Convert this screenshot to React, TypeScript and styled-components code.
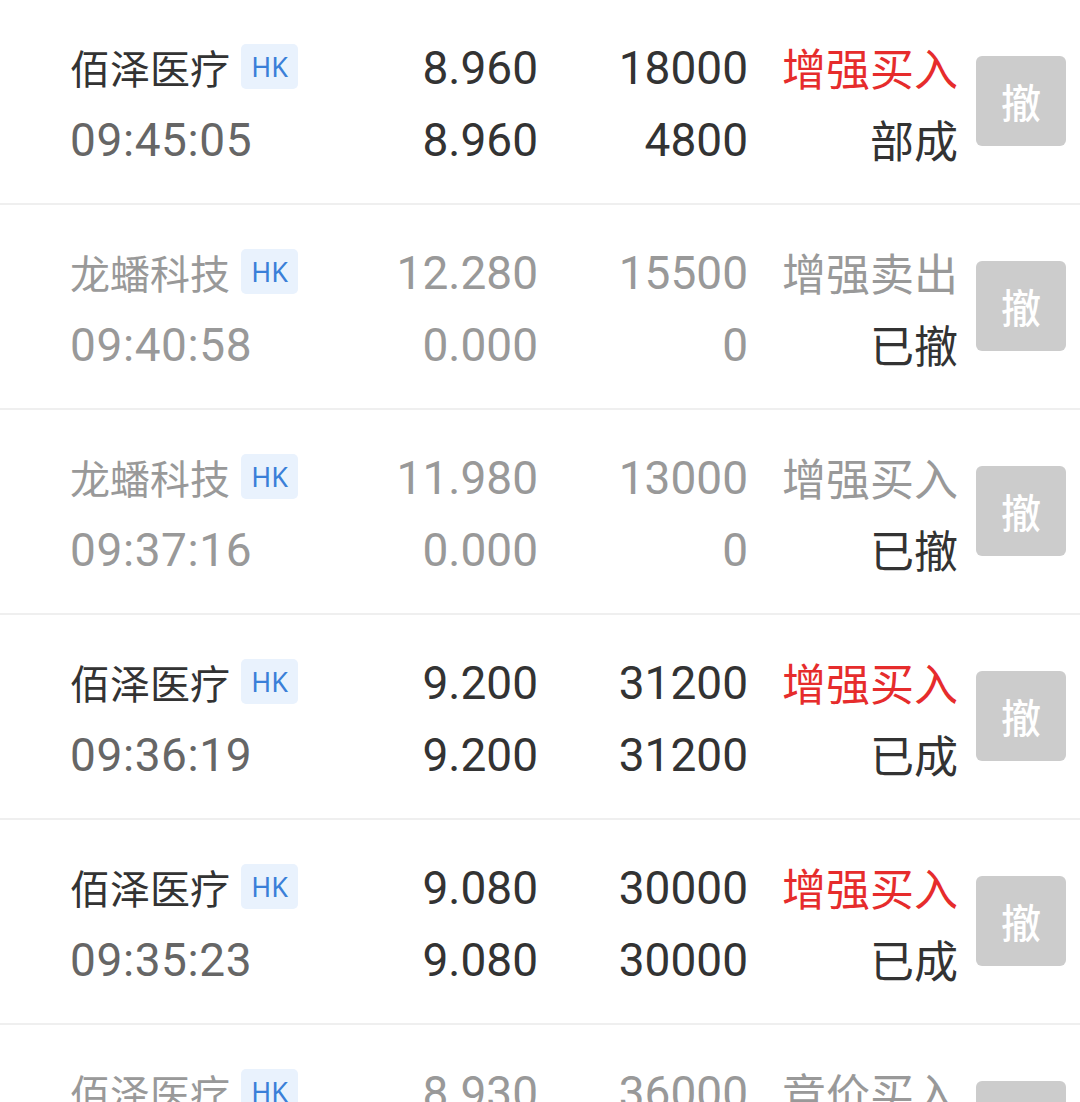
import React from "react";
import styled, { createGlobalStyle } from "styled-components";

type Order = {
	name: string;
	time: string;
	price: string;
	dealPrice: string;
	qty: string;
	dealQty: string;
	side: string;
	status: string;
	active: boolean;
};

const orders: Order[] = [
	{ name: "佰泽医疗", time: "09:45:05", price: "8.960", dealPrice: "8.960", qty: "18000", dealQty: "4800", side: "增强买入", status: "部成", active: true },
	{ name: "龙蟠科技", time: "09:40:58", price: "12.280", dealPrice: "0.000", qty: "15500", dealQty: "0", side: "增强卖出", status: "已撤", active: false },
	{ name: "龙蟠科技", time: "09:37:16", price: "11.980", dealPrice: "0.000", qty: "13000", dealQty: "0", side: "增强买入", status: "已撤", active: false },
	{ name: "佰泽医疗", time: "09:36:19", price: "9.200", dealPrice: "9.200", qty: "31200", dealQty: "31200", side: "增强买入", status: "已成", active: true },
	{ name: "佰泽医疗", time: "09:35:23", price: "9.080", dealPrice: "9.080", qty: "30000", dealQty: "30000", side: "增强买入", status: "已成", active: true },
	{ name: "佰泽医疗", time: "09:30:12", price: "8.930", dealPrice: "0.000", qty: "36000", dealQty: "0", side: "竞价买入", status: "已撤", active: false },
];

const GlobalStyle = createGlobalStyle`
	html, body {
		margin: 0;
		padding: 0;
		background: #fff;
		overflow: hidden;
	}
	body {
		font-family: "Noto Sans CJK SC", "Noto Sans", sans-serif;
	}
`;

const List = styled.div`
	display: flex;
	flex-direction: column;
`;

const Row = styled.div`
	display: grid;
	grid-template-columns: 1fr 210px 210px 210px 108px;
	grid-template-rows: 72px 72px;
	padding: 32px 14px 27px 70px;
	border-bottom: 2px solid #efefef;
	align-items: center;
`;

const NameCell = styled.div<{ $muted: boolean }>`
	display: flex;
	align-items: center;
	gap: 11px;
	font-size: 40px;
	color: ${(p) => (p.$muted ? "#999" : "#333")};
	line-height: 1;
	margin-top: -3px;
`;

const Badge = styled.span`
	display: inline-flex;
	align-items: center;
	justify-content: center;
	width: 57px;
	height: 45px;
	border-radius: 5px;
	background: #e9f2fd;
	color: #3a7fd8;
	font-family: "Noto Sans", sans-serif;
	font-size: 27px;
`;

const Num = styled.div<{ $color: string }>`
	font-family: Roboto, "Noto Sans", sans-serif;
	font-size: 46px;
	text-align: right;
	color: ${(p) => p.$color};
	line-height: 1;
`;

const Time = styled(Num)`
	text-align: left;
	letter-spacing: 0.6px;
`;

const Label = styled.div<{ $color: string }>`
	font-size: 44px;
	text-align: right;
	color: ${(p) => p.$color};
	line-height: 1;
	margin-top: -3px;
`;

const CancelButton = styled.button`
	grid-column: 5;
	grid-row: 1 / span 2;
	justify-self: end;
	align-self: start;
	margin-top: 24px;
	width: 90px;
	height: 90px;
	border: none;
	border-radius: 6px;
	background: #cccccc;
	color: #fff;
	font-family: "Noto Sans CJK SC", sans-serif;
	font-size: 40px;
	font-weight: 500;
	padding: 0;
	cursor: pointer;
`;

const OrderRow = ({ order }: { order: Order }) => {
	const muted = !order.active;
	const main = muted ? "#999" : "#333";
	const sideColor = muted ? "#999" : "#e62c2c";
	return (
		<Row>
			<NameCell $muted={muted}>
				{order.name}
				<Badge>HK</Badge>
			</NameCell>
			<Num $color={main}>{order.price}</Num>
			<Num $color={main}>{order.qty}</Num>
			<Label $color={sideColor}>{order.side}</Label>
			<CancelButton>撤</CancelButton>
			<Time $color={muted ? "#999" : "#666"}>{order.time}</Time>
			<Num $color={main}>{order.dealPrice}</Num>
			<Num $color={main}>{order.dealQty}</Num>
			<Label $color="#333">{order.status}</Label>
		</Row>
	);
};

const App = () => (
	<>
		<GlobalStyle />
		<List>
			{orders.map((o, i) => (
				<OrderRow key={i} order={o} />
			))}
		</List>
	</>
);

export default App;
